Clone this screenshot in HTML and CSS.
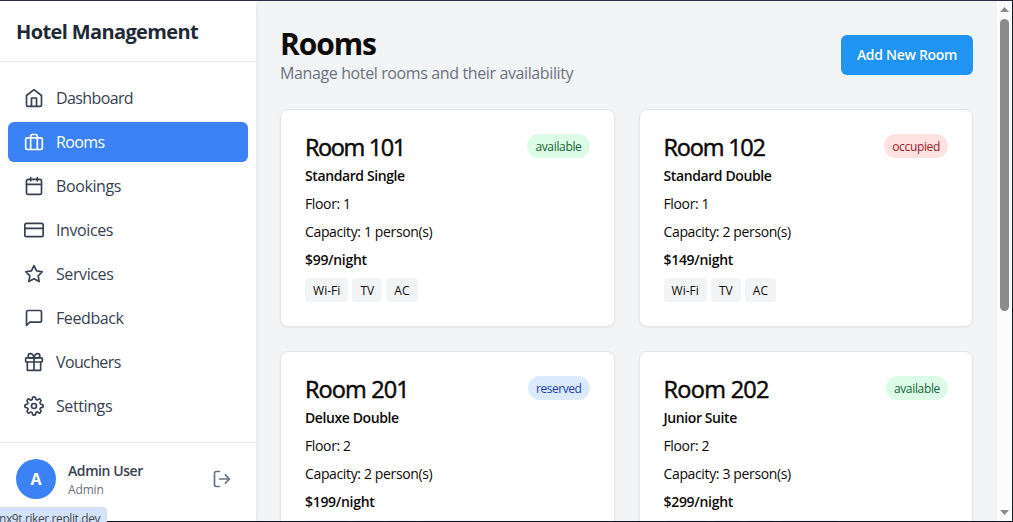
FILE: index.html
```html
<!DOCTYPE html>
<html lang="en">
<head>
<meta charset="utf-8">
<title>Hotel Management</title>
<link rel="stylesheet" href="styles.css">
</head>
<body>
<div class="window">
  <aside class="sidebar">
    <div class="brand"><h1 class="brand-name">Hotel Management</h1></div>
    <nav class="nav">
      <a class="nav-item tight"><svg class="icon" viewBox="0 0 24 24"><path d="M3 9l9-7 9 7v11a2 2 0 0 1-2 2H5a2 2 0 0 1-2-2z"/><path d="M9 22V12h6v10"/></svg><span>Dashboard</span></a>
      <a class="nav-item active tight"><svg class="icon" viewBox="0 0 24 24"><rect x="2" y="7" width="20" height="14" rx="2"/><path d="M16 21V5a2 2 0 0 0-2-2h-4a2 2 0 0 0-2 2v16"/></svg><span>Rooms</span></a>
      <a class="nav-item"><svg class="icon" viewBox="0 0 24 24"><rect x="3" y="4" width="18" height="18" rx="2"/><path d="M16 2v4M8 2v4M3 10h18"/></svg><span>Bookings</span></a>
      <a class="nav-item"><svg class="icon" viewBox="0 0 24 24"><rect x="1" y="4" width="22" height="16" rx="2"/><path d="M1 10h22"/></svg><span>Invoices</span></a>
      <a class="nav-item"><svg class="icon" viewBox="0 0 24 24"><path d="M12 2l3.09 6.26L22 9.27l-5 4.87 1.18 6.88L12 17.77l-6.18 3.25L7 14.14 2 9.27l6.91-1.01z"/></svg><span>Services</span></a>
      <a class="nav-item"><svg class="icon" viewBox="0 0 24 24"><path d="M21 15a2 2 0 0 1-2 2H7l-4 4V5a2 2 0 0 1 2-2h14a2 2 0 0 1 2 2z"/></svg><span>Feedback</span></a>
      <a class="nav-item tight"><svg class="icon" viewBox="0 0 24 24"><rect x="2" y="7" width="20" height="5" rx="1"/><path d="M20 12v10H4V12M12 22V7M12 7H7.5a2.5 2.5 0 0 1 0-5C11 2 12 7 12 7zM12 7h4.500a2.500 2.500 0 0 0 0-5C13 2 12 7 12 7z"/></svg><span>Vouchers</span></a>
      <a class="nav-item"><svg class="icon" viewBox="0 0 24 24"><circle cx="12" cy="12" r="3"/><path d="M19.400 15a1.650 1.650 0 0 0 .33 1.820l.06.06a2 2 0 0 1-2.830 2.830l-.06-.06a1.650 1.650 0 0 0-1.820-.33 1.650 1.650 0 0 0-1 1.510V21a2 2 0 0 1-4 0v-.09A1.650 1.650 0 0 0 9 19.400a1.650 1.650 0 0 0-1.820.33l-.06.06a2 2 0 0 1-2.830-2.830l.06-.06a1.650 1.650 0 0 0 .33-1.820 1.650 1.650 0 0 0-1.510-1H3a2 2 0 0 1 0-4h.09A1.650 1.650 0 0 0 4.600 9a1.650 1.650 0 0 0-.33-1.820l-.06-.06a2 2 0 0 1 2.830-2.830l.06.06a1.650 1.650 0 0 0 1.820.33H9a1.650 1.650 0 0 0 1-1.510V3a2 2 0 0 1 4 0v.09a1.650 1.650 0 0 0 1 1.510 1.650 1.650 0 0 0 1.820-.33l.06-.06a2 2 0 0 1 2.830 2.830l-.06.06a1.650 1.650 0 0 0-.33 1.820V9a1.650 1.650 0 0 0 1.510 1H21a2 2 0 0 1 0 4h-.09a1.650 1.650 0 0 0-1.510 1z"/></svg><span>Settings</span></a>
    </nav>
    <div class="account">
      <div class="avatar">A</div>
      <div class="who"><div class="who-name">Admin User</div><div class="who-role">Admin</div></div>
      <svg class="icon logout" viewBox="0 0 24 24"><path d="M9 21H5a2 2 0 0 1-2-2V5a2 2 0 0 1 2-2h4M16 17l5-5-5-5M21 12H9"/></svg>
    </div>
  </aside>
  <main class="content">
    <header class="page-head">
      <div><h2 class="page-title">Rooms</h2><p class="page-sub">Manage hotel rooms and their availability</p></div>
      <button class="add">Add New Room</button>
    </header>
    <div class="grid">
      <section class="card">
        <div class="card-head"><h3 class="room narrow">Room 101</h3><span class="badge available">available</span></div>
        <p class="line strong">Standard Single</p><p class="line">Floor: 1</p><p class="line">Capacity: 1 person(s)</p><p class="line price">$99/night</p>
        <div class="tags"><span class="tag">Wi-Fi</span><span class="tag">TV</span><span class="tag">AC</span></div>
      </section>
      <section class="card">
        <div class="card-head"><h3 class="room">Room 102</h3><span class="badge occupied">occupied</span></div>
        <p class="line strong">Standard Double</p><p class="line">Floor: 1</p><p class="line">Capacity: 2 person(s)</p><p class="line price">$149/night</p>
        <div class="tags"><span class="tag">Wi-Fi</span><span class="tag">TV</span><span class="tag">AC</span></div>
      </section>
      <section class="card">
        <div class="card-head"><h3 class="room wide">Room 201</h3><span class="badge reserved">reserved</span></div>
        <p class="line strong">Deluxe Double</p><p class="line">Floor: 2</p><p class="line">Capacity: 2 person(s)</p><p class="line price">$199/night</p>
        <div class="tags"><span class="tag w-lg"></span><span class="tag w-sm"></span><span class="tag w-sm"></span><span class="tag w-xl"></span></div>
      </section>
      <section class="card">
        <div class="card-head"><h3 class="room wider">Room 202</h3><span class="badge available">available</span></div>
        <p class="line strong">Junior Suite</p><p class="line">Floor: 2</p><p class="line">Capacity: 3 person(s)</p><p class="line price">$299/night</p>
        <div class="tags"><span class="tag w-lg"></span><span class="tag w-sm"></span><span class="tag w-sm"></span><span class="tag w-xl"></span></div>
      </section>
    </div>
  </main>
  <div class="scrollbar">
    <svg class="arrow" viewBox="0 0 9 5"><path d="M4.500 0L9 5H0z"/></svg>
    <div class="thumb"></div>
    <svg class="arrow down" viewBox="0 0 9 5"><path d="M0 0h9L4.500 5z"/></svg>
  </div>
</div>
<div class="status"><span class="status-text">nx9t.riker.replit.dev</span></div>
</body>
</html>
```
FILE: styles.css
```css
* { box-sizing: border-box; margin: 0; padding: 0; }
html, body { height: 100%; overflow: hidden; }
body { font-family: "Open Sans", "Noto Sans", sans-serif; color: #0c0a09; background: #f3f4f6; }
.window { display: flex; height: 522px; border-top: 1px solid #2b2b46; border-right: 1px solid #14162b; border-bottom: 1px solid #0b1020; overflow: hidden; }

.sidebar { width: 256px; flex: none; display: flex; flex-direction: column; background: #fff; box-shadow: 0 4px 6px -1px rgba(0,0,0,.1), 0 2px 4px -2px rgba(0,0,0,.1); }
.brand { height: 61px; padding: 17px 16px 15px; border-bottom: 1px solid #e5e7eb; }
.brand-name { font-size: 20px; line-height: 28px; font-weight: 700; color: #1f2937; letter-spacing: -.62px; white-space: nowrap; }
.nav { flex: 1; padding: 16px 8px; display: flex; flex-direction: column; gap: 4px; }
.nav-item { display: flex; align-items: center; gap: 12px; height: 40px; padding: 0 16px; border-radius: 6px; font-size: 16px; line-height: 24px; color: #374151; letter-spacing: -.4px; }
.nav-item.tight { letter-spacing: -.62px; }
.nav-item.active { background: #3b82f6; color: #fff; }
.icon { width: 20px; height: 20px; flex: none; fill: none; stroke: currentColor; stroke-width: 2; stroke-linecap: round; stroke-linejoin: round; }
.account { height: 79px; flex: none; display: flex; align-items: flex-start; padding: 16px; border-top: 1px solid #e5e7eb; }
.avatar { width: 40px; height: 40px; border-radius: 50%; background: #3b82f6; color: #fff; font-size: 16px; font-weight: 700; line-height: 41px; text-align: center; }
.who { flex: 1; margin-left: 12px; padding-top: 2px; }
.who-name { font-size: 14px; line-height: 20px; height: 21px; font-weight: 600; color: #374151; letter-spacing: -.42px; }
.who-role { font-size: 12px; line-height: 16px; color: #6b7280; letter-spacing: -.15px; }
.logout { margin: 10px 8px 0 0; color: #6b7280; }

.content { flex: 1; padding: 24px; overflow: hidden; }
.page-head { display: flex; justify-content: space-between; align-items: center; height: 60px; margin-bottom: 24px; }
.page-title { font-size: 30px; line-height: 36px; font-weight: 700; letter-spacing: -1.1px; padding-top: 1px; height: 36px; }
.page-sub { font-size: 16px; line-height: 25px; height: 24px; letter-spacing: -.38px; color: #6b7280; }
.add { width: 132px; height: 40px; border: 0; border-radius: 6px; background: #2094f3; color: #f8fafc; font: 600 14px/20px "Open Sans", "Noto Sans", sans-serif; letter-spacing: -.3px; white-space: nowrap; }
.grid { display: grid; grid-template-columns: 1fr 1fr; gap: 24px; }
.card { height: 218px; padding: 24px; display: flex; flex-direction: column; gap: 8px; background: #fff; border: 1px solid #e7e5e4; border-radius: 8px; box-shadow: 0 1px 2px rgba(0,0,0,.05); }
.card-head { display: flex; justify-content: space-between; height: 24px; }
.room { font-size: 23.5px; line-height: 26px; font-weight: 400; letter-spacing: -1.2px; white-space: nowrap; -webkit-text-stroke: .5px currentColor; }
.room.narrow { letter-spacing: -1.4px; }
.room.wide { letter-spacing: -.9px; }
.room.wider { letter-spacing: -.7px; }
.badge { height: 24px; padding: 0 8px; border-radius: 12px; font-size: 12px; line-height: 26px; letter-spacing: -.34px; }
.available { background: #dcfce7; color: #166534; }
.occupied { background: #fee2e2; color: #991b1b; }
.reserved { background: #dbeafe; color: #1e40af; letter-spacing: -.45px; }
.line { font-size: 14px; line-height: 20px; letter-spacing: -.36px; }
.strong { font-weight: 600; letter-spacing: -.4px; }
.price { font-weight: 600; letter-spacing: -.3px; }
.tags { display: flex; gap: 4px; }
.tag { height: 24px; padding: 0 8px; border-radius: 4px; background: #f3f4f6; font-size: 12px; line-height: 25px; letter-spacing: .05px; }
.w-lg { width: 44px; }
.w-sm { width: 30px; }
.w-xl { width: 60px; }

.scrollbar { width: 15px; flex: none; display: flex; flex-direction: column; align-items: center; padding: 6px 0; background: #fcfcfc; }
.arrow { width: 9px; height: 5px; fill: #8b8b8b; }
.thumb { width: 9px; height: 292px; margin: 7px 0 auto; border-radius: 5px; background: #8b8b8b; }

.status { position: absolute; left: 0; bottom: 0; width: 107px; height: 15px; overflow: hidden; background: #d3e3fd; border-top: 1px solid #dcdfe6; border-right: 1px solid #dcdfe6; border-top-right-radius: 4px; color: #45494f; }
.status-text { display: block; margin-left: -1px; font-size: 12px; line-height: 22px; white-space: nowrap; letter-spacing: -.4px; }
```
